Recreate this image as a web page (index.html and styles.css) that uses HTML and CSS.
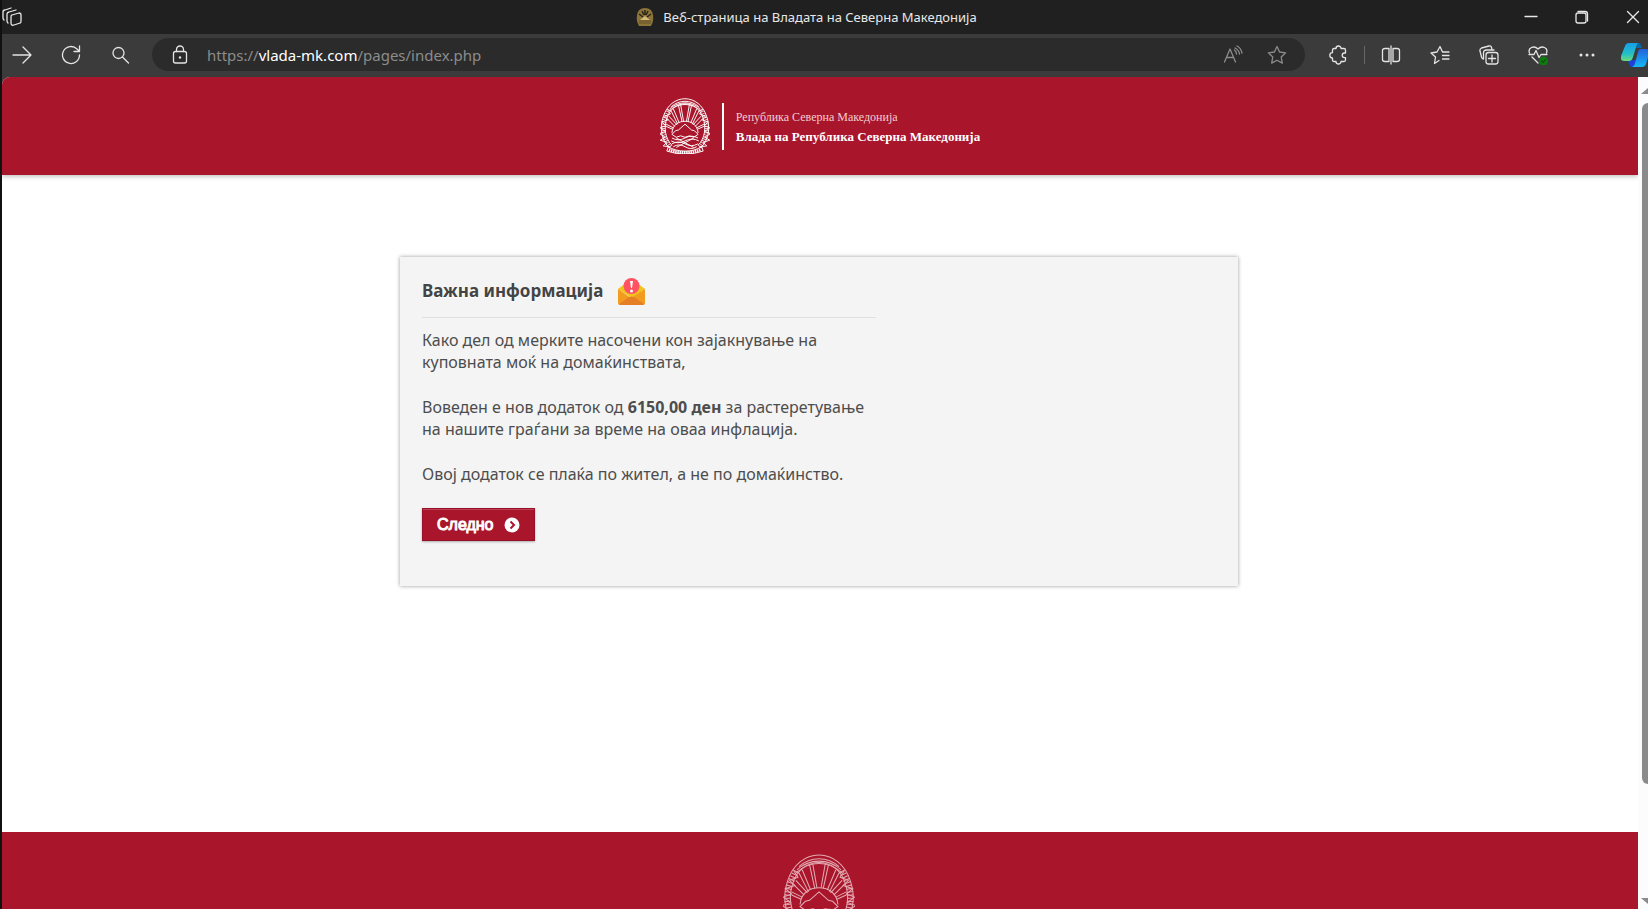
FILE: index.html
```
<!DOCTYPE html>
<html lang="mk">
<head>
	<meta charset="utf-8">
	<title>Веб-страница на Владата на Северна Македонија</title>
	<meta name="viewport" content="width=device-width">
	<link rel="stylesheet" href="styles.css">
</head>
<body>
<svg class="defs" aria-hidden="true">
	<symbol id="emblem" viewBox="2 0 68 77">
		<g fill="none" stroke="currentColor">
			<!-- wreath -->
			<path d="M15 69C3 58 1 40 6 26 11 10 23 1 36 1s25 9 30 25c5 14 3 32-9 43"/>
			<path d="M18 65C8 55 7 40 11 28 15 15 25 8 36 8s21 7 25 20c4 12 3 27-7 37"/>
			<path d="M17 12C28 2 44 2 55 12M15 15C27 4 45 4 57 15M14 18C27 6 45 6 58 18"/>
			<path stroke-width="6" stroke-dasharray="1 2" d="M16 67C5 56 4 40 9 27l6-12M56 67c11-11 12-27 7-40l-6-12"/>
			<path d="M12 16l4 6-8 3 5 5-9 3 6 5-8 3 7 5-8 3 8 5-7 4 9 3-5 5 10 1M60 16l-4 6 8 3-5 5 9 3-6 5 8 3-7 5 8 3-8 5 7 4-9 3 5 5-10 1"/>
			<!-- sun rays -->
			<path d="M27 10l5 23M30 9l4 23M42 9l-4 23M45 10l-5 23M17 18l9 18M20 15l8 19M55 18l-9 18M52 15l-8 19M12 29l10 10M14 25l11 12M60 29L50 39M58 25L47 37M10 39l9 4M10 36l10 5M62 39l-9 4M62 36l-10 5"/>
			<path d="M18 48c1-11 9-16 18-16s17 5 18 16"/>
			<!-- mountain and fields -->
			<path class="mountain" d="M18 50l5-5 4-1 9-8 9 8 4 1 5 5-6 4-6-2-6 2-6-2-6 2z"/>
			<path d="M18 55q9 5 18 0t18 0M17 59q9 5 19 0t19 0M18 63q9-5 18 0t18 0M20 67q8-5 16 0t16 0M24 55l24 13M48 55L24 68"/>
			<!-- ribbon -->
			<path d="M13 67q10 6 23 6t23-6l2 6q-11 4-25 4t-25-4z"/>
			<path stroke-width="4" stroke-dasharray="2 1" d="M14 71q10 4 22 4t22-4"/>
		</g>
	</symbol>
</svg>

<div class="window">
	<header class="titlebar">
		<button class="workspace" aria-label="Workspaces">
			<svg class="icon" viewBox="0 0 20 20"><path d="M10 8l7-2q2 0 2 2v6q0 2-1 2l-6 2q-3 1-3-2V10q0-2 1-2zM6 16q-1-1-1-2V7q0-1.500 2-2l7-2M2 13q-1-1-1-2V5q0-2 2-2l6-2"/></svg>
		</button>
		<div class="tab-title">
			<svg class="favicon" viewBox="0 0 18 18"><path fill="#8d7439" d="M9 0q7 0 8 7 1 6-2 11H3Q0 13 1 7 2 0 9 0"/><path stroke="#2a251a" stroke-width="1.500" d="M6 3l2 4M9 2v5M12 3l-2 4M3 6l4 3M15 6l-4 3"/><path fill="#d2ba7b" d="M9 8l5 4H4z"/><path stroke="#655228" d="M3 13h12M3 15h12"/></svg>
			<span>Веб-страница на Владата на Северна Македонија</span>
		</div>
		<div class="window-buttons">
			<button aria-label="Minimize"><svg class="icon" viewBox="0 0 20 20"><path d="M4 9.500h12"/></svg></button>
			<button aria-label="Restore"><svg class="icon" viewBox="0 0 20 20"><rect x="4" y="6" width="10" height="10" rx="2"/><path d="M6 4.500h7q2.500 0 2.500 2.500v7"/></svg></button>
			<button aria-label="Close"><svg class="icon" viewBox="0 0 20 20"><path d="M4.500 4.500l11 11M15.500 4.500l-11 11"/></svg></button>
		</div>
	</header>

	<nav class="toolbar">
		<div class="tools">
			<button aria-label="Forward"><svg class="icon" viewBox="0 0 20 20"><path d="M1 10h18M11 2l8 8-8 8"/></svg></button>
			<button aria-label="Refresh"><svg class="icon" viewBox="0 0 20 20"><path d="M18.500 10a8.500 8.500 0 1 1-2.500-6l2 2M18.500 1v5.500H13"/></svg></button>
			<button aria-label="Search"><svg class="icon" viewBox="0 0 20 20"><circle cx="8.500" cy="8" r="5.500"/><path d="M12.500 12l6 6"/></svg></button>
		</div>
		<div class="address">
			<button class="lock" aria-label="Site information"><svg class="icon" viewBox="0 0 20 20"><rect x="3.500" y="6.500" width="13" height="11.500" rx="2"/><path d="M6.500 6.500V4.500a3.500 3.500 0 0 1 7 0v2"/><circle class="dot" cx="10" cy="12.500" r="1.200"/></svg></button>
			<a class="url" href="#">https://<b>vlada-mk.com</b>/pages/index.php</a>
			<button class="dim" aria-label="Read aloud"><svg class="icon" viewBox="0 0 20 20"><path d="M1.500 17L7 4l5.500 13M3.500 12.500h7M11.500 5q2 1.500 2 4M12 3q4 2 4.500 6M14 1q4 2 5 7"/></svg></button>
			<button class="dim" aria-label="Add to favorites"><svg class="icon" viewBox="0 0 20 20"><path d="M10 1.500l2.600 5.500 6 .8-4.400 4.200 1.100 6.100L10 15.200l-5.300 2.900L5.800 12 1.400 7.800l6-.8z"/></svg></button>
		</div>
		<div class="tools">
			<button aria-label="Extensions"><svg class="icon" viewBox="0 0 20 20"><path d="M6 3.500h2a2.500 2.500 0 0 1 5 0h3q1.500 0 1.500 1.500v3h-1a2.300 2.300 0 0 0 0 4.600h1v2.400q0 1.500-1.500 1.500h-3a2.500 2.500 0 0 1-5 0H6q-1.500 0-1.500-1.500V13a2.700 2.700 0 0 1 0-5.400V5q0-1.500 1.500-1.500z"/></svg></button>
			<span class="divider"></span>
			<button aria-label="Split screen"><svg class="icon" viewBox="0 0 20 20"><path d="M8 3.500H4q-2.500 0-2.500 2v9q0 2 2.500 2h4zM12 3.500h4q2.500 0 2.500 2v9q0 2-2.500 2h-4zM10 1v18"/></svg></button>
			<button aria-label="Favorites"><svg class="icon" viewBox="0 0 20 20"><path d="M9 15.500l-4.500 3 1-6.500L1 8l6-1 3-5.500L12.500 7H19M12.500 10.500H19M12.500 14H19"/></svg></button>
			<button aria-label="Collections"><svg class="icon" viewBox="0 0 20 20"><rect x="7" y="7.500" width="12" height="11.500" rx="2.500"/><path d="M13 10v7M9.500 13.500h7M4.500 14Q3 14 2.500 12L1 6q-.5-2 1.500-3L10 1q2-.5 2.500 1.500l.5 2.500M4.500 14V8Q4.500 5 7.500 5H15"/></svg></button>
			<button aria-label="Browser essentials"><svg class="icon" viewBox="0 0 20 20"><path d="M1.500 8Q0 4 3.500 2.500 7 1 10 4q3-3 6.500-1.500T18.500 8M1 9.500h5l2-4 3 7 2-3h6M4 12l6 6"/><circle cx="15.500" cy="16" r="4.500" fill="#107c10" stroke="none"/><path stroke="#0a570a" d="M13.500 16l1.500 1.500 2.500-3"/></svg></button>
			<button aria-label="Settings and more"><svg class="icon" viewBox="0 0 20 20"><g class="dot"><circle cx="4" cy="10" r="1.500"/><circle cx="10" cy="10" r="1.500"/><circle cx="16" cy="10" r="1.500"/></g></svg></button>
			<button class="copilot" aria-label="Copilot">
				<svg viewBox="0 0 28 26">
					<defs>
						<linearGradient id="teal" x2="0" y2="1"><stop stop-color="#159ee6"/><stop offset=".6" stop-color="#25bfc9"/><stop offset="1" stop-color="#6ddb78"/></linearGradient>
						<linearGradient id="blue" x2="0" y2="1"><stop stop-color="#2362de"/><stop offset="1" stop-color="#16b7f4"/></linearGradient>
					</defs>
					<path fill="#0967a8" d="M13 1h4q3 0 4 5h-7z"/>
					<path fill="#1b42d5" d="M7 18h8l-2 7h-2q-3 0-4-7"/>
					<path fill="url(#teal)" d="M8 1h10q-2 0-3 4l-3 10q-1 4-4 4H3q-4 0-3-5L4 4q1-3 4-3"/>
					<path fill="url(#blue)" d="M19 7h6q4 0 3 5l-3 10q-1 3-4 3H10q3 0 4-4l3-11q1-3 2-3"/>
				</svg>
			</button>
		</div>
	</nav>

	<div class="viewport">
		<div class="page">
			<header class="site-header">
				<svg class="emblem"><use href="#emblem"/></svg>
				<div class="site-name">
					<span>Република Северна Македонија</span>
					<strong>Влада на Република Северна Македонија</strong>
				</div>
			</header>

			<main>
				<section class="card">
					<div class="card-text">
						<h1>Важна информација
							<svg class="mail" viewBox="0 0 27 27">
								<path fill="#f0c419" d="M0 11l8-6h11l8 6-13 9z"/>
								<path fill="#f29c1f" d="M0 11l13 9 14-9v14q0 2-2 2H2q-2 0-2-2z"/>
								<path fill="#e57e25" d="M1 26l10-7q2-1 5 0l10 7q0 1-2 1H2z"/>
								<circle cx="13.500" cy="8" r="8" fill="#ff5364"/>
								<path fill="#fff" d="M12 3h3l-1 7h-1z"/><circle cx="13.500" cy="13" r="1.500" fill="#fff"/>
							</svg>
						</h1>
						<p>Како дел од мерките насочени кон зајакнување на<br>куповната моќ на домаќинствата,</p>
						<p>Воведен е нов додаток од <b>6150,00 ден</b> за растеретување<br>на нашите граѓани за време на оваа инфлација.</p>
						<p>Овој додаток се плаќа по жител, а не по домаќинство.</p>
						<button class="next" type="button">Следно
							<svg viewBox="0 0 16 16"><circle cx="8" cy="8" r="7.500" fill="#fff"/><path fill="none" stroke="#a9152b" stroke-width="2" d="M6.500 4.500L10 8l-3.500 3.500"/></svg>
						</button>
					</div>
				</section>
			</main>

			<footer class="site-footer">
				<svg class="emblem"><use href="#emblem"/></svg>
			</footer>
		</div>
		<div class="scrollbar">
			<span class="arrow-up"></span>
			<span class="thumb"></span>
			<span class="arrow-down"></span>
		</div>
	</div>
</div>
</body>
</html>
```
FILE: styles.css
```
* {
	box-sizing: border-box;
}
body {
	margin: 0;
	background: #111;
	font-family: "Noto Sans", sans-serif;
}
button {
	display: flex;
	align-items: center;
	justify-content: center;
	padding: 0;
	border: none;
	background: none;
	color: inherit;
	cursor: pointer;
}
.defs {
	display: none;
}
.window {
	display: flex;
	flex-direction: column;
	height: 100vh;
	padding-left: 2px;
	overflow: hidden;
}
.icon {
	width: 20px;
	height: 20px;
	fill: none;
	stroke: currentColor;
	stroke-width: 1.3;
	stroke-linejoin: round;
	stroke-linecap: round;
}
.icon .dot {
	fill: currentColor;
	stroke: none;
}

/* title bar */
.titlebar {
	display: grid;
	grid-template-columns: 1fr auto 1fr;
	align-items: center;
	flex: none;
	height: 34px;
	padding-right: 5px;
	background: #202020;
	color: #e8e8e8;
}
.workspace {
	justify-self: start;
}
.tab-title {
	display: flex;
	align-items: center;
	gap: 9px;
	margin-right: 32px;
	font-size: 13px;
	white-space: nowrap;
}
.favicon {
	width: 18px;
	height: 18px;
	fill: none;
}
.window-buttons {
	display: flex;
	justify-self: end;
	gap: 31px;
}

/* toolbar */
.toolbar {
	display: flex;
	align-items: center;
	flex: none;
	height: 43px;
	padding-bottom: 2px;
	background: #3b3b3b;
	color: #e4e4e4;
}
.tools {
	display: flex;
	align-items: center;
	gap: 9px;
}
.tools button {
	width: 40px;
	height: 33px;
}
.divider {
	width: 1px;
	height: 18px;
	margin: 0 -3px;
	background: #666;
}
.tools .copilot {
	justify-content: flex-start;
	width: 32px;
	padding-left: 5px;
}
.copilot svg {
	flex: none;
	width: 28px;
	height: 26px;
}
.address {
	display: flex;
	align-items: center;
	flex: 1;
	height: 33px;
	margin: 0 13px 0 12px;
	padding: 0 18px;
	border-radius: 17px;
	background: #2b2b2b;
}
.url {
	flex: 1;
	margin-left: 17px;
	color: #8c8c8c;
	font-size: 15px;
	text-decoration: none;
}
.url b {
	color: #fff;
	font-weight: normal;
}
.dim {
	margin-left: 24px;
	color: #8c8c8c;
}

/* page */
.viewport {
	display: flex;
	flex: 1;
	min-height: 0;
	background: #3b3b3b;
}
.page {
	display: flex;
	flex-direction: column;
	flex: 1;
	overflow: hidden;
	border-top-left-radius: 8px;
	background: #fff;
}
.site-header {
	display: flex;
	align-items: center;
	justify-content: center;
	flex: none;
	height: 98px;
	background: #a9152b;
	box-shadow: 0 1px 5px rgba(0, 0, 0, .3);
	color: #fff;
}
.site-header .emblem {
	width: 50px;
	height: 56px;
	stroke-width: 1.3;
}
.site-header .mountain {
	fill: #fff;
}
.site-name {
	display: flex;
	flex-direction: column;
	justify-content: center;
	height: 47px;
	margin-left: 12px;
	padding: 2px 0 0 12px;
	border-left: 2px solid #fff;
	font-family: "Liberation Serif", serif;
	font-size: 12px;
	line-height: 19px;
	white-space: nowrap;
}
.site-name span {
	color: #f0cdd2;
}
.site-name strong {
	font-size: 13px;
}
main {
	flex: 1;
	padding: 82px 22px 20px 20px;
}
.card {
	max-width: 838px;
	margin: 0 auto;
	padding: 17px 22px 45px;
	background: #f4f4f4;
	box-shadow: 0 0 4px rgba(0, 0, 0, .4);
	color: #4d4d4d;
}
.card-text {
	max-width: 454px;
	font-size: 16px;
	line-height: 22px;
	white-space: nowrap;
}
.card h1 {
	display: flex;
	align-items: center;
	gap: 15px;
	height: 44px;
	margin: 0 0 11px;
	padding-bottom: 9px;
	border-bottom: 1px solid #e0e0e0;
	color: #444;
	font-size: 17px;
	text-shadow: 0 1px 1px #fff;
}
.mail {
	width: 27px;
	height: 27px;
}
.card p {
	margin: 0 0 23px;
}
.next {
	gap: 10px;
	height: 33px;
	padding: 0 14px;
	border: 1px solid #96102a;
	background: #a9152b;
	box-shadow: inset 0 1px 0 #bb4053, 0 1px 2px rgba(0, 0, 0, .3);
	color: #fff;
	font-family: "Liberation Sans", sans-serif;
	font-size: 16px;
	-webkit-text-stroke: 1px #fff;
}
.next svg {
	width: 16px;
	height: 16px;
}
.site-footer {
	flex: none;
	height: 77px;
	padding: 22px 2px 0 0;
	overflow: hidden;
	background: #a9152b;
	color: #e3a9b1;
	text-align: center;
}
.site-footer .emblem {
	width: 72px;
	height: 81px;
}
.site-footer .mountain {
	fill: none;
}

/* scrollbar */
.scrollbar {
	display: flex;
	flex-direction: column;
	flex: none;
	width: 10px;
	padding: 11px 0 5px 3px;
	overflow: hidden;
	background: #fcfcfc;
}
.arrow-up,
.arrow-down {
	width: 14px;
	border: solid transparent;
	border-width: 0 7px;
}
.arrow-up {
	border-bottom: 6px solid #8a8a8a;
}
.arrow-down {
	border-top: 6px solid #8a8a8a;
}
.thumb {
	flex: 1;
	width: 14px;
	margin: 9px 0 114px 1px;
	border-radius: 6px;
	background: #8a8a8a;
}
```
